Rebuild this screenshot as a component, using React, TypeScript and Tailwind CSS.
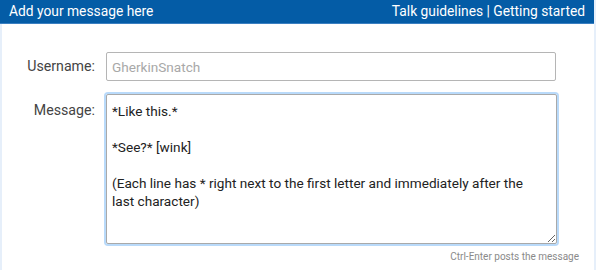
import React from "react";

export default function App() {
  const font = { fontFamily: "Roboto, 'Liberation Sans', sans-serif" };
  return (
    <div className="w-[600px] h-[270px] bg-white overflow-hidden" style={font}>
      <div className="flex w-[596px] h-[270px] border-r-2 border-[#e6effa]">
        <div className="flex flex-col w-[594px]">
          <div className="flex items-center justify-between h-[24px] bg-[#045ca6] border-b border-[#3a7fc1] pl-[9px] pr-[9px] text-white text-[13.8px] leading-none">
            <span>Add your message here</span>
            <span>Talk guidelines | Getting started</span>
          </div>
          <div className="flex-1 border-l-2 border-[#e6effa] pt-[28px]">
            <div className="flex items-center">
              <div className="w-[104px] pr-[11px] text-right text-[14.2px] text-[#444]">Username:</div>
              <input
                readOnly
                placeholder="GherkinSnatch"
                className="w-[450px] h-[29px] border border-[#b5b5b5] rounded-[2px] px-[5px] text-[13.6px] text-[#333] placeholder:text-[#a8a8a8] outline-none"
                style={font}
              />
            </div>
            <div className="flex mt-[13px]">
              <div className="w-[104px] pr-[11px] pt-[6px] text-right text-[14.2px] text-[#444]">Message:</div>
              <textarea
                readOnly
                defaultValue={"*Like this.*\n\n*See?* [wink]\n\n(Each line has * right next to the first letter and immediately after the last character)"}
                className="w-[451px] h-[150px] border border-[#a9a9a9] rounded-[2px] pl-[5px] pr-[24px] pt-[7px] text-[13.6px] leading-[18px] text-[#222] outline-none shadow-[0_0_0_2px_#b9dafa] resize-y"
                style={font}
              />
            </div>
            <div className="flex justify-end w-[577px] mt-[5px] text-[10px] text-[#8a8a8a]">
              Ctrl-Enter posts the message
            </div>
          </div>
        </div>
      </div>
    </div>
  );
}
